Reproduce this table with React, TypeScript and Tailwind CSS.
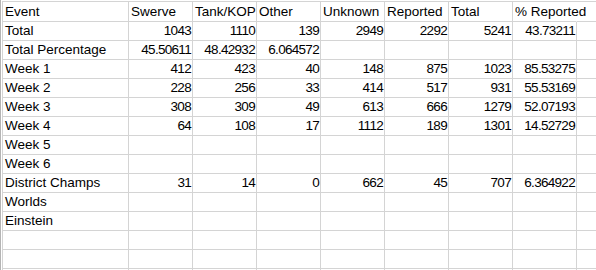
import React from "react";

const header = ["Event", "Swerve", "Tank/KOP", "Other", "Unknown", "Reported", "Total", "% Reported"];

const data: string[][] = [
  ["Total", "1043", "1110", "139", "2949", "2292", "5241", "43.73211"],
  ["Total Percentage", "45.50611", "48.42932", "6.064572", "", "", "", ""],
  ["Week 1", "412", "423", "40", "148", "875", "1023", "85.53275"],
  ["Week 2", "228", "256", "33", "414", "517", "931", "55.53169"],
  ["Week 3", "308", "309", "49", "613", "666", "1279", "52.07193"],
  ["Week 4", "64", "108", "17", "1112", "189", "1301", "14.52729"],
  ["Week 5", "", "", "", "", "", "", ""],
  ["Week 6", "", "", "", "", "", "", ""],
  ["District Champs", "31", "14", "0", "662", "45", "707", "6.364922"],
  ["Worlds", "", "", "", "", "", "", ""],
  ["Einstein", "", "", "", "", "", "", ""],
  ["", "", "", "", "", "", "", ""],
  ["", "", "", "", "", "", "", ""],
  ["", "", "", "", "", "", "", ""],
];

function Cell({
  text,
  first,
  right,
  noRightBorder,
  header,
}: {
  text: string;
  first?: boolean;
  right?: boolean;
  noRightBorder?: boolean;
  header?: boolean;
}) {
  return (
    <div
      className={
        "shrink-0 border-b border-b-[#d4d4d4] border-r whitespace-nowrap leading-[18px] text-black " +
        (first ? "w-[126px] " : "w-[64px] ") +
        (noRightBorder ? "border-r-transparent " : "border-r-[#d4d4d4] ") +
        (header ? "h-[20px] pt-[1px] " : "h-[19px] ") +
        (right ? "text-right pr-[1px] tracking-[-0.7px] " : "text-left pl-[2px] ")
      }
    >
      {text}
    </div>
  );
}

export default function App() {
  return (
    <div className="w-[596px] h-[270px] overflow-hidden bg-white flex font-['Liberation_Sans',Arial,sans-serif] text-[13.5px]">
      <div className="w-[1px] h-full bg-[#b4b4b4] shrink-0" />
      <div className="w-[1px] h-full bg-white shrink-0" />
      <div className="flex flex-col mt-[1px] border-l border-t border-[#d4d4d4] shrink-0">
        <div className="flex">
          {header.map((h, i) => (
            <Cell key={i} text={h} first={i === 0} header noRightBorder={i === 7} />
          ))}
          <Cell text="" header />
        </div>
        {data.map((row, r) => (
          <div className="flex" key={r}>
            {row.map((c, i) => (
              <Cell key={i} text={c} first={i === 0} right={i !== 0} />
            ))}
            <Cell text="" />
          </div>
        ))}
      </div>
    </div>
  );
}
